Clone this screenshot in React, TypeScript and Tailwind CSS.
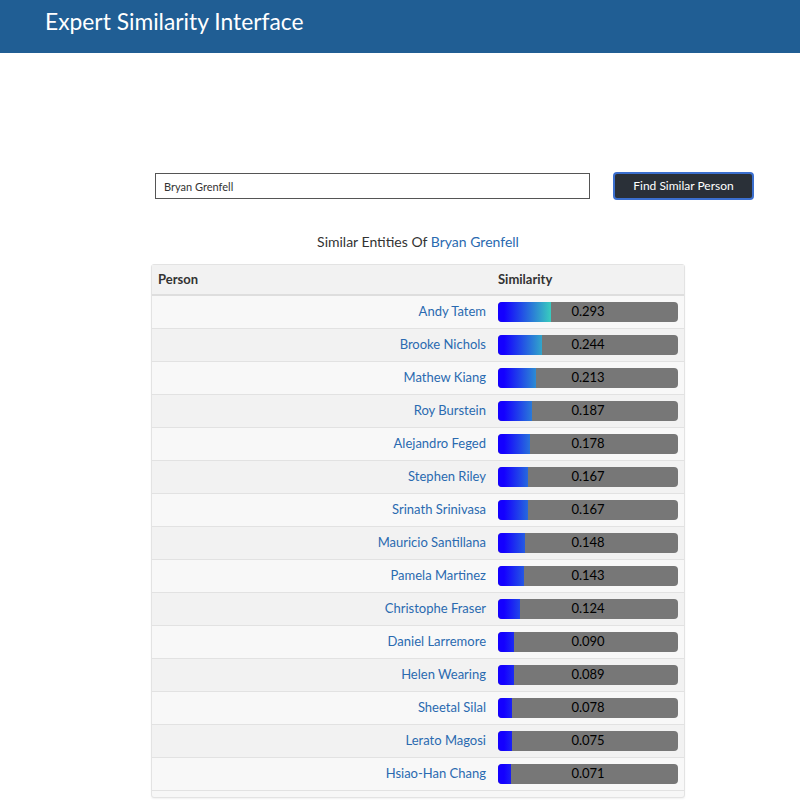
const rows = [
  { name: "Andy Tatem", value: 0.293 },
  { name: "Brooke Nichols", value: 0.244 },
  { name: "Mathew Kiang", value: 0.213 },
  { name: "Roy Burstein", value: 0.187 },
  { name: "Alejandro Feged", value: 0.178 },
  { name: "Stephen Riley", value: 0.167 },
  { name: "Srinath Srinivasa", value: 0.167 },
  { name: "Mauricio Santillana", value: 0.148 },
  { name: "Pamela Martinez", value: 0.143 },
  { name: "Christophe Fraser", value: 0.124 },
  { name: "Daniel Larremore", value: 0.09 },
  { name: "Helen Wearing", value: 0.089 },
  { name: "Sheetal Silal", value: 0.078 },
  { name: "Lerato Magosi", value: 0.075 },
  { name: "Hsiao-Han Chang", value: 0.071 },
]

export default function App() {
  return (
    <div className="min-h-[809px] bg-white font-['Lato',sans-serif] text-[#333]">
      {/* Header */}
      <header className="h-[53px] bg-[#205e94] pl-[45px] flex items-center">
        <h1 className="text-[22.8px] text-white -mt-[10px]">Expert Similarity Interface</h1>
      </header>

      {/* Search */}
      <div className="flex items-center mt-[119px] ml-[155px]">
        <input
          defaultValue="Bryan Grenfell"
          className="w-[435px] h-[26px] border border-[#555] px-[8px] text-[11px] text-[#333] outline-none"
        />
        <button className="ml-[23px] w-[141px] h-[28px] rounded-[4px] bg-[#2a3038] border-2 border-[#3b6fcf] text-white text-[12px]">
          Find Similar Person
        </button>
      </div>

      {/* Results */}
      <div className="ml-[151px] w-[534px]">
        <h2 className="text-center text-[14px] mt-[31px] h-[22px] leading-[22px]">
          Similar Entities Of <a className="text-[#2a6ab0]">Bryan Grenfell</a>
        </h2>
        <div className="mt-[11px] border border-[#e3e3e3] rounded-[3px] shadow-[0_1px_2px_rgba(0,0,0,0.06)] pb-[6px] bg-[#f7f7f7]">
          <div className="flex h-[31px] items-center bg-[#f2f2f2] border-b-2 border-[#dedede] text-[13px] font-bold">
            <div className="w-[339px] pl-[6px]">Person</div>
            <div className="pl-[7px]">Similarity</div>
          </div>
          {rows.map((r, i) => (
            <div
              key={r.name}
              className={`flex h-[33px] items-center border-b border-[#e2e2e2] ${i % 2 === 0 ? "bg-[#f8f8f8]" : "bg-[#f2f2f2]"}`}
            >
              <div className="w-[339px] pr-[5px] text-right text-[13px] text-[#2a6ab0]">{r.name}</div>
              <div className="pl-[7px]">
                <div className="relative w-[180px] h-[20px] rounded-[4px] bg-[#777] overflow-hidden">
                  <div
                    className="h-full bg-[linear-gradient(90deg,#1400ff_6px,#38c9bf_52px)]"
                    style={{ width: `${r.value * 180}px` }}
                  />
                  <span className="absolute inset-0 flex items-center justify-center text-[13px] text-black">
                    {r.value.toFixed(3)}
                  </span>
                </div>
              </div>
            </div>
          ))}
        </div>
      </div>
    </div>
  )
}
